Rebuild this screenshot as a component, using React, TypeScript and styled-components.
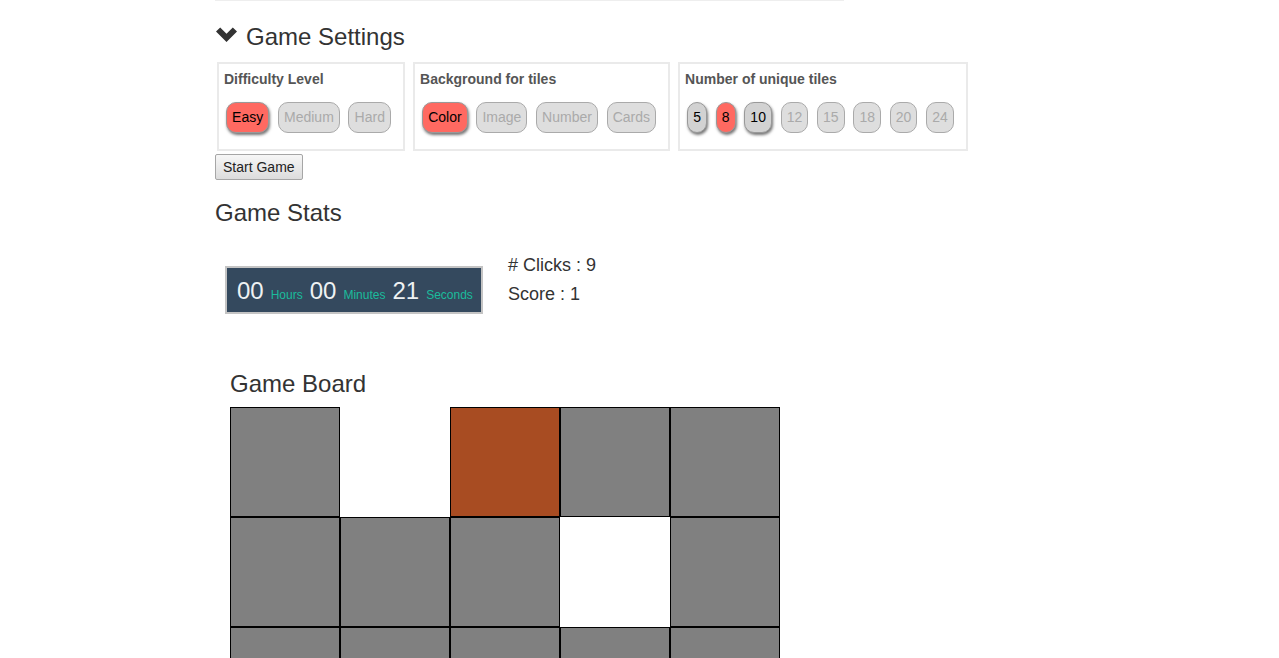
import React from "react";
import styled, { createGlobalStyle, css } from "styled-components";

const GlobalStyle = createGlobalStyle`
  html, body { margin: 0; padding: 0; background: #fff; }
  body {
    font-family: "Liberation Sans", Helvetica, Arial, sans-serif;
    font-size: 14px;
    color: #333;
  }
`;

const Page = styled.div`
  padding-left: 215px;
  padding-bottom: 40px;
`;

const Divider = styled.div`
  width: 629px;
  height: 1px;
  background: #eee;
`;

const SectionTitle = styled.h3<{ $top: number; $bottom: number; $indent?: number }>`
  display: flex;
  align-items: flex-start;
  margin: ${(p) => p.$top}px 0 ${(p) => p.$bottom}px ${(p) => p.$indent ?? 0}px;
  font-size: 24px;
  font-weight: 400;
  line-height: 26px;
  color: #333;
`;

const Chevron = styled.svg`
  width: 21px;
  height: 15px;
  margin: 3px 9px 0 1px;
  flex: none;
`;

const PanelRow = styled.div`
  display: flex;
  gap: 8px;
  margin-left: 2px;
`;

const Panel = styled.div`
  border: 2px solid #eaeaea;
  padding: 5px 12px 16px 5px;
`;

const PanelTitle = styled.div`
  font-weight: 700;
  font-size: 14px;
  line-height: 20px;
  color: #555;
`;

const ButtonRow = styled.div`
  display: flex;
  gap: 8.6px;
  margin-top: 13px;
  padding-left: 2px;
`;

type Mode = "selected" | "available" | "disabled";

const Pill = styled.button<{ $mode: Mode }>`
  box-sizing: border-box;
  height: 31px;
  padding: 0 5.1px;
  border-radius: 10px;
  border: 1px solid #aaa;
  font-family: "Liberation Sans", Helvetica, Arial, sans-serif;
  font-size: 14px;
  line-height: 29px;
  cursor: pointer;
  ${(p) =>
    p.$mode === "selected"
      ? css`
          background: #ff6961;
          color: #000;
          border-color: #999;
          box-shadow: 1px 2px 3px rgba(0, 0, 0, 0.55);
        `
      : p.$mode === "available"
      ? css`
          background: #d2d2d2;
          color: #000;
          border-color: #999;
          box-shadow: 1px 2px 3px rgba(0, 0, 0, 0.55);
        `
      : css`
          background: #dedede;
          color: #aaa;
        `}
`;

const StartButton = styled.button`
  display: block;
  box-sizing: border-box;
  margin-top: 3px;
  height: 26px;
  padding: 0 7px;
  border: 1px solid #a6a6a6;
  border-radius: 2px;
  background: linear-gradient(#f7f7f7, #dcdcdc);
  font-family: "Liberation Sans", Helvetica, Arial, sans-serif;
  font-size: 14px;
  line-height: 24px;
  color: #222;
`;

const StatsRow = styled.div`
  display: flex;
  align-items: flex-start;
`;

const Timer = styled.div`
  margin: 15px 0 0 10px;
  box-sizing: border-box;
  width: 258px;
  height: 48px;
  border: 2px solid #c4c4c4;
  background: #34495e;
  padding: 8px 10px 0;
  line-height: 30px;
  white-space: nowrap;
`;

const TimeValue = styled.span<{ $first?: boolean }>`
  font-size: 24px;
  color: #eef2f3;
  margin-left: ${(p) => (p.$first ? 0 : 7)}px;
`;

const TimeUnit = styled.span`
  font-size: 12px;
  color: #1abc9c;
  margin-left: 7px;
`;

const Counts = styled.div`
  margin-left: 25px;
  font-size: 18px;
  line-height: 29px;
  color: #333;
`;

const Board = styled.div`
  display: grid;
  grid-template-columns: repeat(5, 110px);
  grid-auto-rows: 110px;
  margin-left: 15px;
  width: 550px;
`;

type TileKind = "hidden" | "empty" | "open";

const Tile = styled.div<{ $kind: TileKind; $color?: string }>`
  box-sizing: border-box;
  border: 1px solid ${(p) => (p.$kind === "empty" ? "#fff" : "#000")};
  background: ${(p) =>
    p.$kind === "empty" ? "#fff" : p.$kind === "open" ? p.$color : "#808080"};
`;

const difficulty: [string, Mode][] = [
  ["Easy", "selected"],
  ["Medium", "disabled"],
  ["Hard", "disabled"],
];
const backgrounds: [string, Mode][] = [
  ["Color", "selected"],
  ["Image", "disabled"],
  ["Number", "disabled"],
  ["Cards", "disabled"],
];
const counts: [string, Mode][] = [
  ["5", "available"],
  ["8", "selected"],
  ["10", "available"],
  ["12", "disabled"],
  ["15", "disabled"],
  ["18", "disabled"],
  ["20", "disabled"],
  ["24", "disabled"],
];

const tiles: { kind: TileKind; color?: string }[] = [
  { kind: "hidden" },
  { kind: "empty" },
  { kind: "open", color: "#a84c22" },
  { kind: "hidden" },
  { kind: "hidden" },
  { kind: "hidden" },
  { kind: "hidden" },
  { kind: "hidden" },
  { kind: "empty" },
  { kind: "hidden" },
  { kind: "hidden" },
  { kind: "hidden" },
  { kind: "hidden" },
  { kind: "hidden" },
  { kind: "hidden" },
  { kind: "hidden" },
];

function OptionPanel({ title, items }: { title: string; items: [string, Mode][] }) {
  return (
    <Panel>
      <PanelTitle>{title}</PanelTitle>
      <ButtonRow>
        {items.map(([label, mode]) => (
          <Pill key={label} $mode={mode}>
            {label}
          </Pill>
        ))}
      </ButtonRow>
    </Panel>
  );
}

export default function App() {
  return (
    <>
      <GlobalStyle />
      <Page>
        <Divider />
        <SectionTitle $top={23} $bottom={12}>
          <Chevron viewBox="0 0 21 15">
            <path d="M0 4.6 L4.2 0.4 L10.5 6.7 L16.8 0.4 L21 4.6 L10.5 15 Z" fill="#333" />
          </Chevron>
          Game Settings
        </SectionTitle>
        <PanelRow>
          <OptionPanel title="Difficulty Level" items={difficulty} />
          <OptionPanel title="Background for tiles" items={backgrounds} />
          <OptionPanel title="Number of unique tiles" items={counts} />
        </PanelRow>
        <StartButton>Start Game</StartButton>
        <SectionTitle $top={20} $bottom={25}>
          Game Stats
        </SectionTitle>
        <StatsRow>
          <Timer>
            <TimeValue $first>00</TimeValue>
            <TimeUnit>Hours</TimeUnit>
            <TimeValue>00</TimeValue>
            <TimeUnit>Minutes</TimeUnit>
            <TimeValue>21</TimeValue>
            <TimeUnit>Seconds</TimeUnit>
          </Timer>
          <Counts>
            <div># Clicks : 9</div>
            <div>Score : 1</div>
          </Counts>
        </StatsRow>
        <SectionTitle $top={57} $bottom={10} $indent={15}>
          Game Board
        </SectionTitle>
        <Board>
          {tiles.map((t, i) => (
            <Tile key={i} $kind={t.kind} $color={t.color} />
          ))}
        </Board>
      </Page>
    </>
  );
}
